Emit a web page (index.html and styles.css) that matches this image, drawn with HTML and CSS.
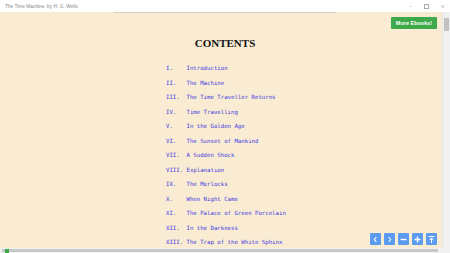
FILE: index.html
```html
<!DOCTYPE html>
<html>
<head>
<meta charset="utf-8">
<link rel="stylesheet" href="styles.css">
</head>
<body>
<div class="window">
  <div class="titlebar">
    <span class="title">The Time Machine, by H. G. Wells</span>
    <div class="controls">
      <span class="ctl">&#8211;</span>
      <span class="ctl box"></span>
      <span class="ctl">&#215;</span>
    </div>
  </div>
  <div class="main">
    <div class="content">
      <div class="rule"></div>
      <a class="more">More Ebooks!</a>
      <h1 class="heading">CONTENTS</h1>
      <ol class="toc">
        <li><span class="num">I.</span><span class="name">Introduction</span></li>
        <li><span class="num">II.</span><span class="name">The Machine</span></li>
        <li><span class="num">III.</span><span class="name">The Time Traveller Returns</span></li>
        <li><span class="num">IV.</span><span class="name">Time Travelling</span></li>
        <li><span class="num">V.</span><span class="name">In the Golden Age</span></li>
        <li><span class="num">VI.</span><span class="name">The Sunset of Mankind</span></li>
        <li><span class="num">VII.</span><span class="name">A Sudden Shock</span></li>
        <li><span class="num">VIII.</span><span class="name">Explanation</span></li>
        <li><span class="num">IX.</span><span class="name">The Morlocks</span></li>
        <li><span class="num">X.</span><span class="name">When Night Came</span></li>
        <li><span class="num">XI.</span><span class="name">The Palace of Green Porcelain</span></li>
        <li><span class="num">XII.</span><span class="name">In the Darkness</span></li>
        <li><span class="num">XIII.</span><span class="name">The Trap of the White Sphinx</span></li>
      </ol>
      <div class="nav">
        <span class="btn"><svg viewBox="0 0 11 11"><path d="M6.3 3 L4.3 5.5 L6.3 8" fill="none" stroke="#fff" stroke-width="1.1"/></svg></span>
        <span class="btn"><svg viewBox="0 0 11 11"><path d="M4.7 3 L6.7 5.5 L4.7 8" fill="none" stroke="#fff" stroke-width="1.1"/></svg></span>
        <span class="btn"><svg viewBox="0 0 11 11"><path d="M2.5 5.5 H8.5" stroke="#fff" stroke-width="1.4"/></svg></span>
        <span class="btn"><svg viewBox="0 0 11 11"><path d="M2.5 5.5 H8.5 M5.5 2.5 V8.5" stroke="#fff" stroke-width="1.4"/></svg></span>
        <span class="btn"><svg viewBox="0 0 11 11"><path d="M2.5 2.6 H8.5 M5.5 4 V9 M3.4 6.2 L5.5 4 L7.6 6.2" fill="none" stroke="#fff" stroke-width="1"/></svg></span>
      </div>
    </div>
    <div class="vscroll">
      <div class="arrow up"></div>
      <div class="thumb"></div>
      <div class="track"></div>
      <div class="arrow down"></div>
    </div>
  </div>
  <div class="hscroll">
    <div class="hthumb"><span class="green"></span></div>
  </div>
</div>
</body>
</html>
```
FILE: styles.css
```css
html, body {
  margin: 0;
  padding: 0;
}
body {
  width: 450px;
  height: 253px;
  overflow: hidden;
  background: #fff;
}
.window {
  display: flex;
  flex-direction: column;
  width: 450px;
  height: 253px;
}
.titlebar {
  height: 12px;
  flex: none;
  display: flex;
  align-items: center;
  justify-content: space-between;
  background: #fff;
  padding: 0 0 0 5px;
}
.title {
  font-family: "Liberation Sans", Arial, sans-serif;
  font-size: 4.8px;
  color: #8a8a8a;
}
.controls {
  display: flex;
  align-items: center;
  height: 12px;
}
.ctl {
  width: 15px;
  text-align: center;
  font-family: "DejaVu Sans", sans-serif;
  font-size: 5px;
  color: #999;
}
.ctl.box {
  width: 3px;
  height: 3px;
  border: 0.8px solid #aaa;
  margin: 0 6px;
}
.main {
  flex: 1;
  display: flex;
  min-height: 0;
}
.content {
  flex: 1;
  position: relative;
  background: #faebd3;
  display: flex;
  flex-direction: column;
  border-left: 1px solid #fbe9cf;
}
.rule {
  margin-left: 113px;
  width: 222px;
  height: 1px;
  background: #c2bbae;
  border-bottom: 1px solid #d8cfbf;
}
.more {
  position: absolute;
  top: 5px;
  right: 5px;
  width: 46px;
  height: 12px;
  background: #3da94a;
  color: #fff;
  font-family: "Liberation Sans", Arial, sans-serif;
  font-weight: bold;
  font-size: 5.5px;
  display: flex;
  align-items: center;
  justify-content: center;
  border-radius: 1px;
}
.heading {
  margin: 22.5px 0 0 0;
  text-align: center;
  font-family: "Liberation Serif", "Times New Roman", serif;
  font-weight: bold;
  font-size: 11px;
  line-height: 14px;
  color: #111;
  padding-left: 7px;
}
.toc {
  list-style: none;
  margin: 11.5px 0 0 165px;
  padding: 0;
  display: flex;
  flex-direction: column;
}
.toc li {
  display: flex;
  height: 14.5px;
  align-items: center;
  font-family: "DejaVu Sans Mono", "Liberation Mono", monospace;
  font-size: 5.7px;
  color: #3a3ae2;
}
.num {
  width: 20.5px;
  flex: none;
}
.nav {
  position: absolute;
  right: 5px;
  bottom: 3px;
  display: flex;
  gap: 3px;
}
.btn {
  width: 11px;
  height: 12px;
  background: #5b9bf0;
  border-radius: 1px;
  display: flex;
  align-items: center;
  justify-content: center;
}
.btn svg {
  width: 11px;
  height: 11px;
}
.vscroll {
  width: 7px;
  flex: none;
  display: flex;
  flex-direction: column;
  background: #f0f0f0;
  border-left: 1px solid #e6e6e6;
}
.arrow {
  height: 5px;
  flex: none;
}
.thumb {
  height: 13px;
  margin: 1px 1px 0;
  background: #c1c1c1;
  flex: none;
}
.track {
  flex: 1;
}
.hscroll {
  height: 5px;
  flex: none;
  background: #f0f0f0;
  display: flex;
  align-items: center;
}
.hthumb {
  width: 436px;
  height: 3px;
  background: #c8c8c8;
  margin-left: 2px;
  display: flex;
  align-items: center;
}
.green {
  width: 4px;
  height: 4px;
  margin-left: 3px;
  background: #3da94a;
}
```
